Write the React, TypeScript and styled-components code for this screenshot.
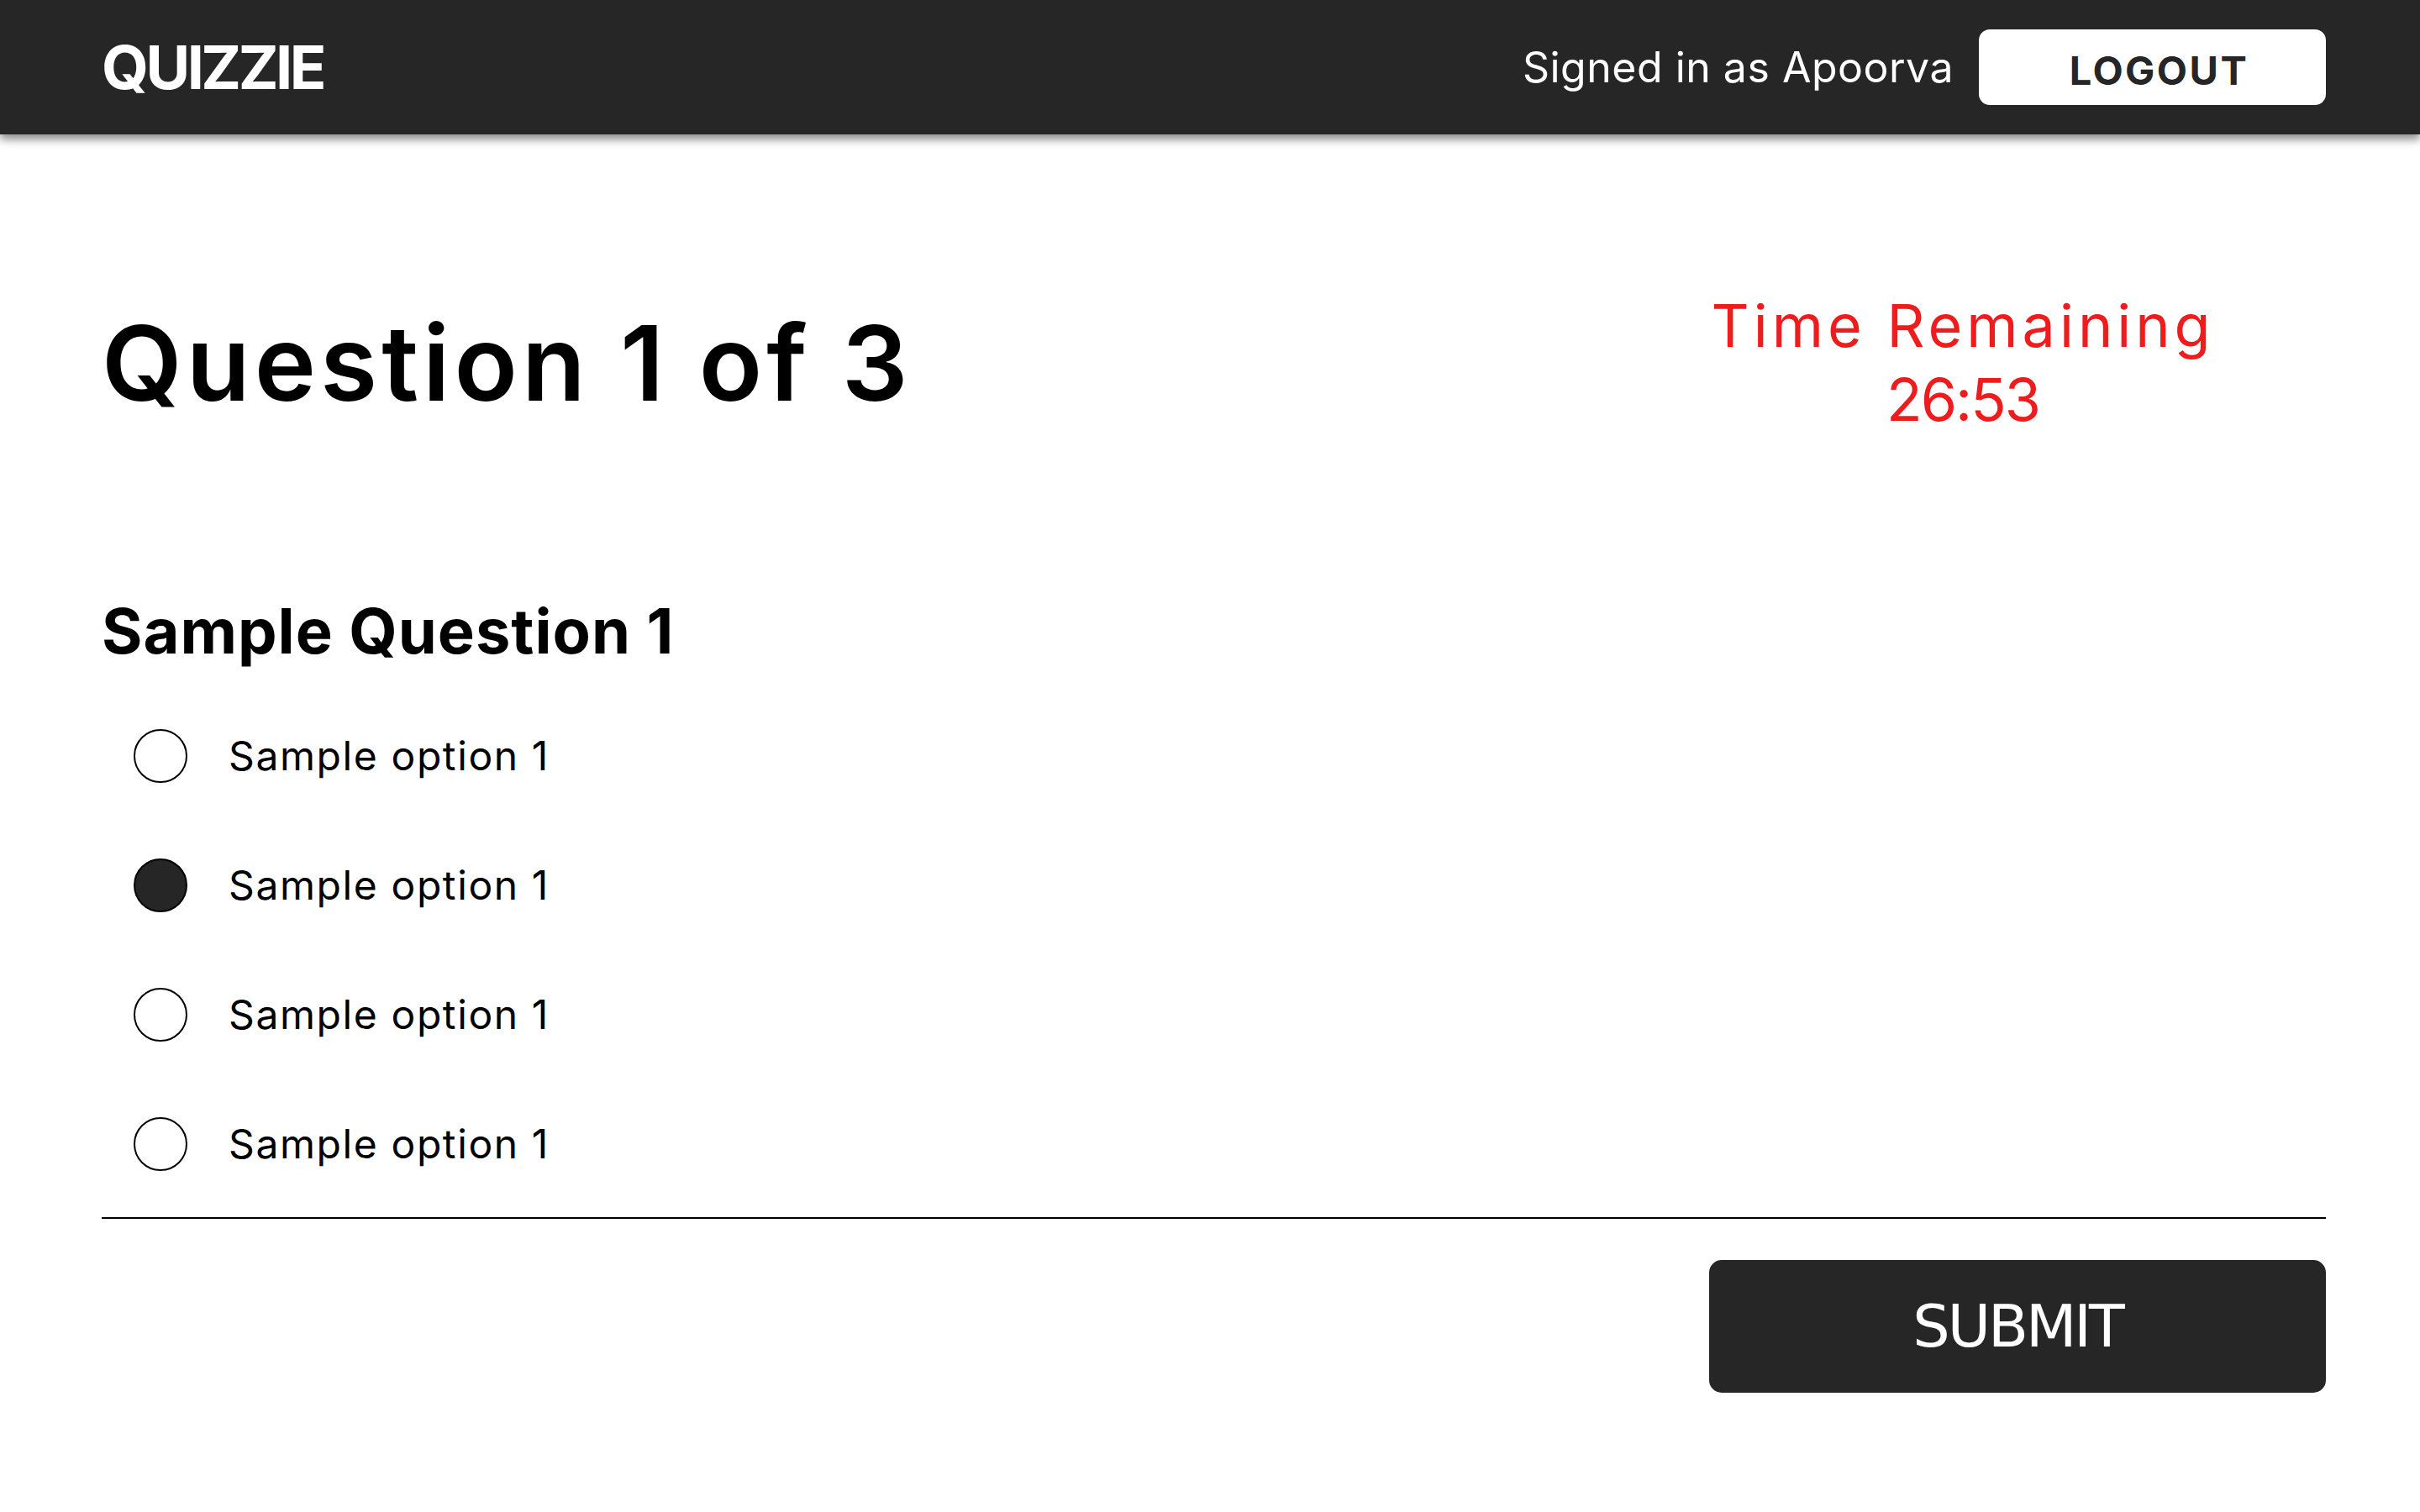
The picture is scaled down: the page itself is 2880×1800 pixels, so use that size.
import React, { useState } from "react";
import styled, { createGlobalStyle } from "styled-components";

const GlobalStyle = createGlobalStyle`
  html, body {
    margin: 0;
    padding: 0;
    background: #ffffff;
    font-family: Inter, "Open Sans", sans-serif;
  }
  * { box-sizing: border-box; }
`;

const Page = styled.div`
  min-height: 1800px;
  background: #ffffff;
`;

const Header = styled.header`
  height: 160px;
  background: #262626;
  display: flex;
  align-items: center;
  justify-content: space-between;
  padding: 0 112px 0 121px;
  box-shadow: 0 6px 10px rgba(0, 0, 0, 0.45);
  position: relative;
  z-index: 1;
`;

const Logo = styled.div`
  color: #ffffff;
  font-family: Inter, sans-serif;
  font-weight: 700;
  font-size: 72px;
  letter-spacing: -3.5px;
  line-height: 1;
`;

const UserArea = styled.div`
  display: flex;
  align-items: center;
  gap: 30px;
`;

const SignedIn = styled.span`
  color: #ffffff;
  font-family: Inter, sans-serif;
  font-weight: 400;
  font-size: 50px;
  letter-spacing: 0.5px;
  line-height: 1;
`;

const LogoutButton = styled.button`
  width: 413px;
  height: 90px;
  background: #ffffff;
  border: none;
  border-radius: 13px;
  color: #262626;
  font-family: Inter, sans-serif;
  font-weight: 700;
  font-size: 47px;
  letter-spacing: 2.5px;
  line-height: 1;
  padding: 6px 0 0 16px;
  cursor: pointer;
`;

const Main = styled.main`
  padding: 184px 112px 0 121px;
`;

const TitleRow = styled.div`
  display: flex;
  align-items: center;
  justify-content: space-between;
  height: 176px;
`;

const Title = styled.h1`
  margin: 0;
  font-family: Inter, sans-serif;
  font-weight: 600;
  font-size: 124px;
  line-height: 1.2;
  color: #000000;
  letter-spacing: 5px;
`;

const Timer = styled.div`
  width: 864px;
  text-align: center;
  color: #ee1c1c;
  font-family: Inter, sans-serif;
  font-weight: 400;
  font-size: 70px;
  line-height: 88px;
`;

const TimerLine = styled.div<{ $spacing: number }>`
  letter-spacing: ${(p) => p.$spacing}px;
`;

const QuestionText = styled.h2`
  margin: 187px 0 0 0;
  font-family: Inter, sans-serif;
  font-weight: 700;
  font-size: 74px;
  line-height: 88px;
  letter-spacing: 1px;
  color: #000000;
`;

const OptionList = styled.div`
  display: flex;
  flex-direction: column;
  gap: 90px;
  margin-top: 73px;
  padding-left: 38px;
`;

const OptionRow = styled.label`
  display: flex;
  align-items: center;
  gap: 49px;
  height: 64px;
  cursor: pointer;
`;

const Radio = styled.span<{ $checked: boolean }>`
  width: 64px;
  height: 64px;
  border-radius: 50%;
  border: 2px solid #000000;
  background: ${(p) => (p.$checked ? "#262626" : "#ffffff")};
  flex-shrink: 0;
`;

const OptionText = styled.span`
  font-family: Inter, sans-serif;
  font-weight: 400;
  font-size: 48px;
  letter-spacing: 1.6px;
  line-height: 1;
  color: #000000;
`;

const Divider = styled.hr`
  margin: 55px 0 0 0;
  border: none;
  height: 2px;
  background: #000000;
`;

const Footer = styled.div`
  display: flex;
  justify-content: flex-end;
  margin-top: 49px;
`;

const SubmitButton = styled.button`
  width: 734px;
  height: 158px;
  background: #262626;
  border: none;
  border-radius: 15px;
  color: #ffffff;
  font-family: "DejaVu Sans", sans-serif;
  font-weight: 400;
  font-size: 70px;
  letter-spacing: -3px;
  line-height: 1;
  cursor: pointer;
`;

const options = ["Sample option 1", "Sample option 1", "Sample option 1", "Sample option 1"];

export default function App() {
  const [selected, setSelected] = useState(1);
  return (
    <Page>
      <GlobalStyle />
      <Header>
        <Logo>QUIZZIE</Logo>
        <UserArea>
          <SignedIn>Signed in as Apoorva</SignedIn>
          <LogoutButton>LOGOUT</LogoutButton>
        </UserArea>
      </Header>
      <Main>
        <TitleRow>
          <Title>Question 1 of 3</Title>
          <Timer>
            <TimerLine $spacing={5}>Time Remaining</TimerLine>
            <TimerLine $spacing={-2}>26:53</TimerLine>
          </Timer>
        </TitleRow>
        <QuestionText>Sample Question 1</QuestionText>
        <OptionList>
          {options.map((o, i) => (
            <OptionRow key={i} onClick={() => setSelected(i)}>
              <Radio $checked={selected === i} />
              <OptionText>{o}</OptionText>
            </OptionRow>
          ))}
        </OptionList>
        <Divider />
        <Footer>
          <SubmitButton>SUBMIT</SubmitButton>
        </Footer>
      </Main>
    </Page>
  );
}
